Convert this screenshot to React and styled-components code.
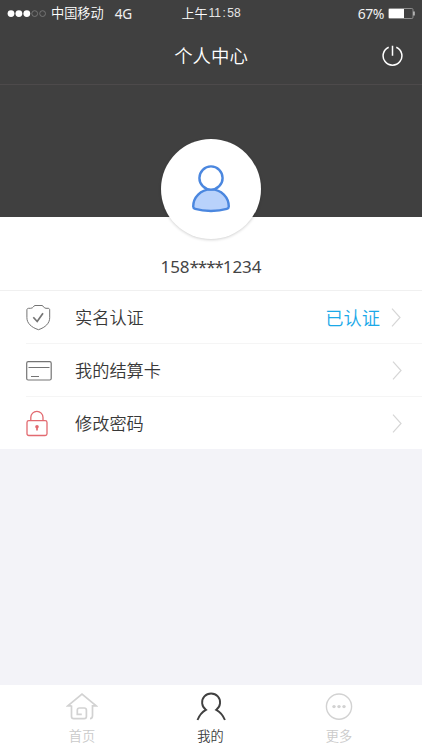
import React from "react";
import styled, { createGlobalStyle } from "styled-components";

const GlobalStyle = createGlobalStyle`
  * {
    box-sizing: border-box;
  }
  body {
    margin: 0;
    background: #f3f3f8;
    font-family: "Noto Sans", "Noto Sans CJK SC", sans-serif;
    font-weight: 350;
  }
`;

const Page = styled.div`
  display: flex;
  flex-direction: column;
  width: 422px;
  height: 750px;
  overflow: hidden;
  color: #383838;
  background: #f3f3f8;
`;

const Header = styled.header`
  height: 85px;
  color: #fff;
  background: #404040;
  border-bottom: 1px solid #4d4a4b;
`;

const StatusBar = styled.div`
  display: grid;
  grid-template-columns: 1fr auto 1fr;
  align-items: center;
  height: 27px;
  padding: 0 7px;
  font-size: 13px;
  line-height: 27px;
  white-space: nowrap;
`;

const Carrier = styled.div`
  display: flex;
  align-items: center;

  .name {
    margin: 0 11px 0 4px;
    font-size: 13.2px;
  }
  .network {
    font-size: 13.6px;
    font-weight: 400;
    letter-spacing: -0.4px;
    color: #f0f0f0;
  }
`;

const Clock = styled.div`
  display: flex;
  font-size: 13px;

  .digits {
    margin-left: 1px;
    font-family: "Liberation Sans", sans-serif;
    font-size: 12px;
    color: #e6e6e6;
  }
  .colon {
    margin: 0 1.5px;
  }
`;

const Battery = styled.div`
  display: flex;
  align-items: center;
  justify-content: flex-end;
  gap: 4px;
  font-size: 14px;
  font-weight: 400;
  letter-spacing: -0.5px;
  color: #f0f0f0;
`;

const NavBar = styled.div`
  display: grid;
  grid-template-columns: 40px 1fr 40px;
  align-items: center;
  height: 57px;
  padding: 0 10px;

  h1 {
    margin: 0;
    font-size: 18.4px;
    font-weight: 350;
    line-height: 57px;
    text-align: center;
  }
`;

const IconButton = styled.button`
  display: flex;
  justify-content: center;
  padding: 0;
  border: 0;
  color: inherit;
  background: none;
`;

const Profile = styled.section`
  display: flex;
  flex-direction: column;
  align-items: center;
  height: 205px;
  padding-top: 54px;
  background: linear-gradient(#404040 132px, #fff 132px);
`;

const Avatar = styled.div`
  display: flex;
  justify-content: center;
  width: 100px;
  height: 100px;
  padding-top: 25px;
  border-radius: 50%;
  background: #fff;
  box-shadow: 0 1px 3px rgba(0, 0, 0, 0.18);
`;

const Phone = styled.p`
  margin: 16px 0 0;
  font-size: 17px;
  font-weight: 400;
  line-height: 24px;
  color: #444;

  .mask {
    letter-spacing: -1.1px;
  }
`;

const Menu = styled.ul`
  margin: 0;
  padding: 0 0 0 26px;
  list-style: none;
  background: #fff;
  border-top: 1px solid #f0f0f0;
`;

const MenuItem = styled.li`
  display: flex;
  align-items: center;
  height: 53px;
  padding-right: ${props => (props.$inset ? "21px" : "20px")};
  border-bottom: 1px solid #f5f5f5;

  &:last-child {
    border-bottom: 0;
    height: 52px;
  }
  .icon {
    display: flex;
    width: 49px;
    padding-top: 1px;
  }
  .label {
    flex: 1;
    padding-top: 2px;
    font-size: 17.2px;
    line-height: 24px;
  }
  .status {
    margin-right: 11px;
    font-size: 18.3px;
    color: #1ba9e8;
  }
`;

const TabBar = styled.nav`
  display: flex;
  justify-content: center;
  height: 65px;
  padding-right: 1px;
  margin-top: auto;
  background: #fff;
`;

const Tab = styled.a`
  display: flex;
  flex-direction: column;
  align-items: center;
  width: 128.5px;
  padding-top: 7px;
  font-size: 13.2px;
  line-height: 20px;
  color: ${props => (props.$active ? "#404040" : "#cacaca")};

  svg {
    margin-bottom: 4px;
  }
`;

const SignalDots = () => (
  <svg width="40" height="8" viewBox="0 0 40 8">
    {[0, 1, 2, 3, 4].map(i => (
      <circle
        key={i}
        cx={4 + i * 7.9}
        cy="3.6"
        r={i < 3 ? 3.4 : 2.9}
        fill={i < 3 ? "#fff" : "none"}
        stroke={i < 3 ? "none" : "#808080"}
        strokeWidth="0.8"
      />
    ))}
  </svg>
);

const BatteryIcon = () => (
  <svg width="27" height="12" viewBox="0 0 27 12" fill="none">
    <rect x="0.5" y="0.5" width="24.5" height="10" rx="1.2" stroke="#a0a0a0" strokeWidth="0.8" />
    <rect x="1" y="1" width="15" height="9" fill="#fff" />
    <path d="M26 3.5v4" stroke="#fff" />
  </svg>
);

const PowerIcon = () => (
  <svg width="22" height="22" viewBox="0 0 22 22" fill="none" stroke="#fff" strokeWidth="1.5">
    <path d="M7.7 2.2a9.4 9.4 0 1 0 7.6 0M11.5 0.8v10" />
  </svg>
);

const UserIcon = () => (
  <svg width="40" height="50" viewBox="0 0 40 50" fill="none" stroke="#4b87df" strokeWidth="2.4">
    <path
      d="M20 25.4C9.5 25.4 2.2 33.5 2.2 42.5c0 1.4.7 2 2 2.4 9 2.7 22.6 2.7 31.6 0 1.3-.4 2-1 2-2.4 0-9-7.3-17.1-17.8-17.1z"
      fill="#b9d2fb"
    />
    <circle cx="20" cy="14" r="11.6" fill="#fff" />
  </svg>
);

const ShieldIcon = () => (
  <svg width="26" height="27" viewBox="0 0 26 27" fill="none" stroke="#747474">
    <path d="M9 1.5h7c1.5 0 1.5 2.8 4 2.8h2c1 0 1.7.6 1.7 1.6v7.8c0 5.5-4.3 9.7-11.2 12C5.300 23.400.9 19.200.9 13.700V5.900c0-1 .7-1.600 1.700-1.600h2C7.500 4.300 7.500 1.500 9 1.500z" />
    <path d="M7.300 13.200l3.900 4.300 5.800-8.300" strokeWidth="1.700" />
  </svg>
);

const CardIcon = () => (
  <svg width="26" height="20" viewBox="0 0 26 20" fill="none" stroke="#747474">
    <rect x="0.7" y="0.7" width="24.5" height="18.3" rx="1.5" strokeWidth="1.2" />
    <path d="M2.500 6.500h21M5 15.500h8" />
  </svg>
);

const LockIcon = () => (
  <svg width="22" height="27" viewBox="0 0 22 27" fill="none" stroke="#e26a70" strokeWidth="1.3">
    <rect x="1" y="10.7" width="20" height="14.8" rx="1.8" />
    <path d="M4.800 10.500V7.400a6.100 6.100 0 0 1 12.200 0v3.100" />
    <circle cx="11" cy="16.7" r="1.8" fill="#e26a70" stroke="none" />
    <path d="M11 17v3.500" strokeWidth="1.7" />
  </svg>
);

const Chevron = () => (
  <svg width="10" height="20" viewBox="0 0 10 20" fill="none" stroke="#d6d6d6" strokeWidth="1.2">
    <path d="M1 1.700l8 8.800-8 8.800" />
  </svg>
);

const HomeIcon = () => (
  <svg width="32" height="30" viewBox="0 0 32 30" fill="none" stroke="#d2d2d2" strokeWidth="1.7">
    <path d="M5.500 13.800H1.800L16 2.200l14.200 11.600h-3.700v10c0 1.900-1 2.800-2.500 2.800" />
    <path d="M5.500 13.400v11c0 1.500.8 2.200 2.200 2.200h10.500c1.500 0 2.200-.8 2.200-2.200v-6.200c0-1.500-.8-2.200-2.200-2.200h-4.700c-1.500 0-2.200.7-2.200 2.200v4.200h4.500" />
  </svg>
);

const MineIcon = () => (
  <svg width="30" height="30" viewBox="0 0 30 30" fill="none" stroke="#404040" strokeWidth="1.9">
    <path d="M1.500 28c1.800-4.600 4.300-8 8.400-10.200a9 9 0 1 1 10.400 0C24.400 20 27.100 23.400 28.900 28" />
  </svg>
);

const MoreIcon = () => (
  <svg width="30" height="30" viewBox="0 0 30 30" fill="none" stroke="#d2d2d2" strokeWidth="1.4">
    <circle cx="15" cy="14.6" r="12.6" />
    {[10, 15, 20].map(x => (
      <circle key={x} cx={x} cy="14.6" r="1.7" fill="#d2d2d2" stroke="none" />
    ))}
  </svg>
);

const menu = [
  { label: "实名认证", icon: <ShieldIcon />, status: "已认证" },
  { label: "我的结算卡", icon: <CardIcon /> },
  { label: "修改密码", icon: <LockIcon /> }
];

const tabs = [
  { label: "首页", icon: <HomeIcon /> },
  { label: "我的", icon: <MineIcon />, active: true },
  { label: "更多", icon: <MoreIcon /> }
];

const App = () => {
  return (
    <Page>
      <GlobalStyle />
      <Header>
        <StatusBar>
          <Carrier>
            <SignalDots />
            <span className="name">中国移动</span>
            <span className="network">4G</span>
          </Carrier>
          <Clock>
            <span>上午</span>
            <span className="digits">
              11<span className="colon">:</span>58
            </span>
          </Clock>
          <Battery>
            <span>67%</span>
            <BatteryIcon />
          </Battery>
        </StatusBar>
        <NavBar>
          <span />
          <h1>个人中心</h1>
          <IconButton aria-label="退出">
            <PowerIcon />
          </IconButton>
        </NavBar>
      </Header>
      <Profile>
        <Avatar>
          <UserIcon />
        </Avatar>
        <Phone>
          158<span className="mask">****</span>1234
        </Phone>
      </Profile>
      <Menu>
        {menu.map(item => (
          <MenuItem key={item.label} $inset={Boolean(item.status)}>
            <span className="icon">{item.icon}</span>
            <span className="label">{item.label}</span>
            {item.status ? <span className="status">{item.status}</span> : null}
            <Chevron />
          </MenuItem>
        ))}
      </Menu>
      <TabBar>
        {tabs.map(tab => (
          <Tab key={tab.label} $active={tab.active}>
            {tab.icon}
            <span>{tab.label}</span>
          </Tab>
        ))}
      </TabBar>
    </Page>
  );
};

export default App;
